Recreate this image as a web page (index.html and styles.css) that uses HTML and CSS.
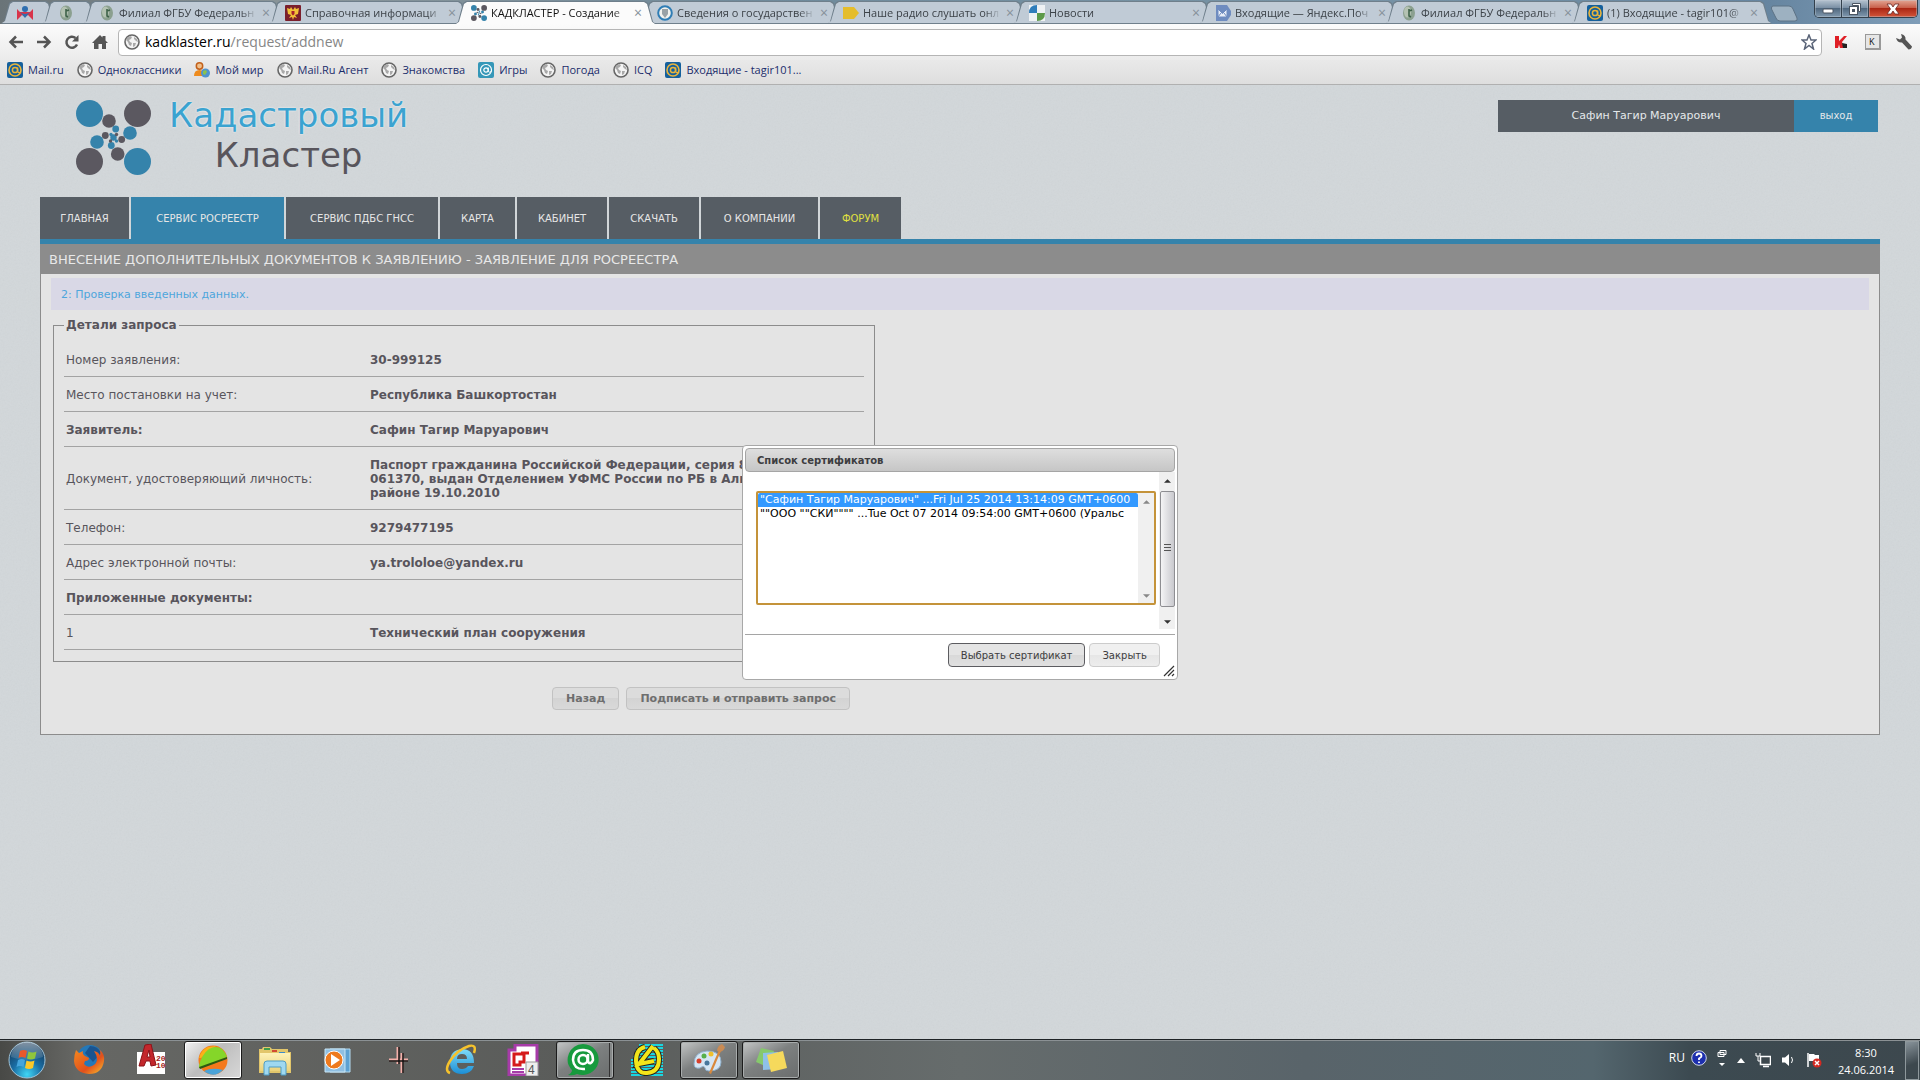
FILE: index.html
```html
<!DOCTYPE html>
<html lang="ru">
<head>
<meta charset="utf-8">
<title>КАДКЛАСТЕР - Создание запроса</title>
<link rel="stylesheet" href="styles.css">
</head>
<body>
<svg class="sprite" width="0" height="0" aria-hidden="true">
  <defs>
    <radialGradient id="orb" cx=".5" cy=".9" r=".9"><stop offset="0" stop-color="#3fd6f5"/><stop offset=".45" stop-color="#1a6ea5"/><stop offset="1" stop-color="#12304e"/></radialGradient>
    <linearGradient id="shine" x2="0" y2="1"><stop offset="0" stop-color="#fff" stop-opacity=".8"/><stop offset="1" stop-color="#fff" stop-opacity=".15"/></linearGradient>
    <linearGradient id="fox" x2="1" y2="1"><stop offset="0" stop-color="#f58a1f"/><stop offset=".6" stop-color="#e2501c"/><stop offset="1" stop-color="#f9c22e"/></linearGradient>
    <linearGradient id="folder" x2="0" y2="1"><stop offset="0" stop-color="#fdf2b8"/><stop offset="1" stop-color="#ecd27a"/></linearGradient>
    <linearGradient id="ie" x2="0" y2="1"><stop offset="0" stop-color="#7fdcf8"/><stop offset="1" stop-color="#1c8fd6"/></linearGradient>
  </defs>
  <symbol id="globe" viewBox="0 0 16 16"><circle cx="8" cy="8" r="7" fill="#f4f4f4" stroke="#666" stroke-width="1.6"/><path d="M3 4l3-2 2 1-1 2-2 1 1 2 2 1-1 3-2-1-1-3-2-2zM10 3l3 2 1 3-2-1-2-2zM9 9l3 0-1 3-2 1z" fill="#a9a9a9"/></symbol>
  <symbol id="mail" viewBox="0 0 16 16"><rect width="16" height="16" rx="2" fill="#15609c"/><circle cx="8" cy="8" r="6" fill="none" stroke="#e9b43c" stroke-width="1.6"/><circle cx="8" cy="8" r="2.6" fill="none" stroke="#e9b43c" stroke-width="1.5"/><path d="M10.6 5.5v4q1 2 3 .5" fill="none" stroke="#e9b43c" stroke-width="1.4"/></symbol>
  <symbol id="leaf" viewBox="0 0 16 16"><ellipse cx="8" cy="8" rx="6" ry="7.5" fill="#8ba08f"/><ellipse cx="6.5" cy="7" rx="3.5" ry="5.5" fill="#b4c2b2"/><path d="M8 4v7l2 1M8 6l3-1" stroke="#3e6249" stroke-width="1.6" fill="none"/></symbol>
  <symbol id="cluster" viewBox="0 0 75 75">
    <g fill="#3583ab"><circle cx="13.5" cy="13.5" r="13.5"/><circle cx="61.500" cy="61.500" r="13.5"/><circle cx="54" cy="33" r="6.800"/><circle cx="21" cy="42" r="6.800"/><circle cx="39.700" cy="29" r="3.400"/><circle cx="35.300" cy="45.500" r="3.400"/><circle cx="37.500" cy="37.500" r="3.200"/><circle cx="35" cy="34.500" r="1.700"/><circle cx="40.500" cy="41" r="1.700"/></g>
    <g fill="#5b5860"><circle cx="61.500" cy="13.500" r="13.5"/><circle cx="13.500" cy="61.500" r="13.5"/><circle cx="33" cy="21" r="6.800"/><circle cx="41.700" cy="54" r="6.800"/><circle cx="29.300" cy="35.500" r="3.400"/><circle cx="45.700" cy="39.500" r="3.400"/><circle cx="40.500" cy="34.500" r="1.700"/><circle cx="34.500" cy="41" r="1.700"/></g>
  </symbol>
  <symbol id="up" viewBox="0 0 8 4"><path d="M4 0l4 4H0z"/></symbol>
  <symbol id="down" viewBox="0 0 8 4"><path d="M4 4l4-4H0z"/></symbol>
</svg>

<header class="browser">
  <div class="tabstrip">
    <nav class="tabs" aria-label="Вкладки">
      <div class="tab pinned"><svg class="fav" viewBox="0 0 16 16"><path d="M0 4l3 3h10l3-3v11l-5-5-3 2-3-2-5 5z" fill="#d8344a"/><circle cx="8" cy="4" r="3" fill="#2f6fb0"/><path d="M3 7q5 4 10 0l-5 6z" fill="#2f6fb0"/></svg></div>
      <div class="tab pinned"><svg class="fav"><use href="#leaf"/></svg></div>
      <div class="tab"><svg class="fav"><use href="#leaf"/></svg><a href="#">Филиал ФГБУ Федеральн</a><button aria-label="Закрыть вкладку">×</button></div>
      <div class="tab"><svg class="fav" viewBox="0 0 16 16"><rect width="16" height="16" rx="1" fill="#7b1f2c"/><path d="M8 5l2-3 1 2 3-1-1 6-3 1 2 3-3-1-1 3-1-3-3 1 2-3-3-1-1-6 3 1 1-2z" fill="#f2c238"/><path d="M6.500 6h3v3L8 10.500 6.500 9z" fill="#a8202c"/></svg><a href="#">Справочная информаци</a><button aria-label="Закрыть вкладку">×</button></div>
      <div class="tab active"><svg class="fav"><use href="#cluster"/></svg><a href="#">КАДКЛАСТЕР - Создание</a><button aria-label="Закрыть вкладку">×</button></div>
      <div class="tab"><svg class="fav" viewBox="0 0 16 16"><circle cx="8" cy="8" r="6.800" fill="#f2f2ee" stroke="#2f7db5" stroke-width="2"/><path d="M5 4h6v5l-3 4-3-4z" fill="#9aa2a6"/></svg><a href="#">Сведения о государствен</a><button aria-label="Закрыть вкладку">×</button></div>
      <div class="tab"><svg class="fav" viewBox="0 0 16 16"><path d="M0 2h11l5 6-5 6H0z" fill="#e5bd2c"/></svg><a href="#">Наше радио слушать онл</a><button aria-label="Закрыть вкладку">×</button></div>
      <div class="tab"><svg class="fav" viewBox="0 0 16 16"><rect width="16" height="16" fill="#eef1f4"/><path d="M8 0v8H0q0-8 8-8z" fill="#2f7dbb"/><path d="M8 16V8h8q0 8-8 8z" fill="#5d9a4a"/></svg><a href="#">Новости</a><button aria-label="Закрыть вкладку">×</button></div>
      <div class="tab"><svg class="fav" viewBox="0 0 16 16"><path d="M1 0h11l4 6v4l-4 6H1z" fill="#6f8cc0"/><path d="M3 4h9v8H3zM3 4l4.500 4.500L12 4M3 12l3-4M12 12L9 8" fill="#e9eef8" stroke="#6f8cc0"/></svg><a href="#">Входящие — Яндекс.Поч</a><button aria-label="Закрыть вкладку">×</button></div>
      <div class="tab"><svg class="fav"><use href="#leaf"/></svg><a href="#">Филиал ФГБУ Федеральн</a><button aria-label="Закрыть вкладку">×</button></div>
      <div class="tab"><svg class="fav"><use href="#mail"/></svg><a href="#">(1) Входящие - tagir101@</a><button aria-label="Закрыть вкладку">×</button></div>
    </nav>
    <button class="newtab" aria-label="Новая вкладка"><svg width="28" height="17" viewBox="0 0 28 17"><path d="M3 1h16q3 0 4 3l4 9q1 3-2 3H10q-3 0-4-3L1.500 4Q1 1 3 1z" fill="#9db1c1" stroke="#5d7285"/></svg></button>
    <div class="wincontrols">
      <button aria-label="Свернуть"><svg width="12" height="12"><rect x="1" y="6" width="10" height="4" rx="1" fill="#fff" stroke="#4a5562"/></svg></button>
      <button aria-label="Свернуть в окно"><svg width="14" height="14"><path d="M4.500 1.500h8v8h-2v-6h-6z" fill="#fff" stroke="#4a5562"/><rect x="1.500" y="4.500" width="8" height="8" fill="#fff" stroke="#4a5562"/><rect x="4" y="7" width="3" height="3" fill="#4a5562"/></svg></button>
      <button class="close" aria-label="Закрыть"><svg width="14" height="12" viewBox="0 0 14 12"><path d="M1 1h4l2 3 2-3h4L9.500 6l3.500 5H9L7 8l-2 3H1l3.500-5z" fill="#fff" stroke="#6a2a26" stroke-width=".8"/></svg></button>
    </div>
  </div>

  <div class="toolbar">
    <button aria-label="Назад"><svg viewBox="0 0 16 16"><path d="M15 8H3M8 2.500L2.500 8 8 13.500" class="stroke"/></svg></button>
    <button aria-label="Вперёд"><svg viewBox="0 0 16 16"><path d="M1 8h12M8 2.500L13.500 8 8 13.500" class="stroke"/></svg></button>
    <button aria-label="Обновить"><svg viewBox="0 0 16 16"><path d="M13 10.500A5.500 5.500 0 1 1 11.500 4" class="stroke"/><path d="M14.500 1v6.500H8z" fill="#555"/></svg></button>
    <button aria-label="Домой"><svg viewBox="0 0 16 16"><path d="M8 1l2.500 2.500V2h3v4.500L16 9h-2v6h-4v-5H6.500v5H2V9H0z" fill="#555"/></svg></button>
    <div class="omnibox">
      <svg width="16" height="16"><use href="#globe"/></svg>
      <a class="url" href="#"><b>kadklaster.ru</b>/request/addnew</a>
      <button class="star" aria-label="Добавить в закладки"><svg width="16" height="16" viewBox="0 0 16 16"><path d="M8 1l2 5h5l-4 3.500L12.500 15 8 11.500 3.500 15 5 9.500 1 6h5z" fill="#fff" stroke="#5a6478" stroke-width="1.500"/></svg></button>
    </div>
    <div class="extensions">
      <button aria-label="Проверка ссылок"><svg viewBox="0 0 16 16"><path d="M1 2h4v5l5-5h3L8 8l2 6H6L5 10.500 4 14H1z" fill="#df1f26"/><path d="M8 9l5 1v4H9z" fill="#222"/></svg></button>
      <button class="key" aria-label="Виртуальная клавиатура">K</button>
      <button aria-label="Настройка"><svg viewBox="0 0 16 16"><path d="M5 0q5 1 4.500 5.500l6.500 7q-.5 3-3.500 3L6 8.500Q1.500 9 0 4l4 1.500 2-2z" fill="#555"/></svg></button>
    </div>
  </div>

  <nav class="bookmarks" aria-label="Закладки">
    <a href="#"><svg><use href="#mail"/></svg>Mail.ru</a>
    <a href="#"><svg><use href="#globe"/></svg>Одноклассники</a>
    <a href="#"><svg viewBox="0 0 16 16"><circle cx="5.500" cy="4" r="3.200" fill="#f0c08c" stroke="#c2601a" stroke-width="1.500"/><path d="M0 14q0-6 5.500-6T11 14z" fill="#ee8b1e"/><circle cx="11.500" cy="11" r="4.500" fill="#4f94cf"/><path d="M9 9l3-1 1 2-2 3-2-1z" fill="#8bc34e"/></svg>Мой мир</a>
    <a href="#"><svg><use href="#globe"/></svg>Mail.Ru Агент</a>
    <a href="#"><svg><use href="#globe"/></svg>Знакомства</a>
    <a href="#"><svg viewBox="0 0 16 16"><rect width="16" height="16" rx="2" fill="#3597b8"/><circle cx="8" cy="8" r="5.500" fill="none" stroke="#fff" stroke-width="1.200"/><circle cx="8" cy="8" r="2.200" fill="none" stroke="#fff" stroke-width="1.200"/><path d="M10.300 5.500v4q1 1.500 3 0" fill="none" stroke="#fff"/></svg>Игры</a>
    <a href="#"><svg><use href="#globe"/></svg>Погода</a>
    <a href="#"><svg><use href="#globe"/></svg>ICQ</a>
    <a href="#"><svg><use href="#mail"/></svg>Входящие - tagir101...</a>
  </nav>
</header>

<main class="page">
  <div class="masthead">
    <a class="logo" href="#">
      <svg width="75" height="75"><use href="#cluster"/></svg>
      <span class="wordmark"><span class="top">Кадастровый</span><span>Кластер</span></span>
    </a>
    <div class="account"><span class="who">Сафин Тагир Маруарович</span><a href="#">выход</a></div>
  </div>

  <nav class="menu" aria-label="Меню">
    <a href="#">ГЛАВНАЯ</a>
    <a href="#" class="current">СЕРВИС РОСРЕЕСТР</a>
    <a href="#">СЕРВИС ПДБС ГНСС</a>
    <a href="#">КАРТА</a>
    <a href="#">КАБИНЕТ</a>
    <a href="#">СКАЧАТЬ</a>
    <a href="#">О КОМПАНИИ</a>
    <a href="#" class="forum">ФОРУМ</a>
  </nav>

  <section class="panel">
    <h1>ВНЕСЕНИЕ ДОПОЛНИТЕЛЬНЫХ ДОКУМЕНТОВ К ЗАЯВЛЕНИЮ - ЗАЯВЛЕНИЕ ДЛЯ РОСРЕЕСТРА</h1>
    <p class="step">2: Проверка введенных данных.</p>
    <form class="request">
      <fieldset>
        <legend>Детали запроса</legend>
        <table>
          <tr><td>Номер заявления:</td><td>30-999125</td></tr>
          <tr><td>Место постановки на учет:</td><td>Республика Башкортостан</td></tr>
          <tr><th scope="row">Заявитель:</th><td>Сафин Тагир Маруарович</td></tr>
          <tr><td>Документ, удостоверяющий личность:</td><td>Паспорт гражданина Российской Федерации, серия 8<br>061370, выдан Отделением УФМС России по РБ в Аль<br>районе 19.10.2010</td></tr>
          <tr><td>Телефон:</td><td>9279477195</td></tr>
          <tr><td>Адрес электронной почты:</td><td>ya.trololoe@yandex.ru</td></tr>
          <tr><th scope="row">Приложенные документы:</th><td></td></tr>
          <tr><td>1</td><td>Технический план сооружения</td></tr>
        </table>
      </fieldset>
      <div class="actions">
        <button type="button" class="ui">Назад</button>
        <button type="button" class="ui">Подписать и отправить запрос</button>
      </div>
    </form>
  </section>

  <div class="dialog" role="dialog" aria-labelledby="dlg-title">
    <h2 id="dlg-title">Список сертификатов</h2>
    <div class="dlg-body">
      <div class="listbox">
        <select size="8" aria-labelledby="dlg-title">
          <option class="picked">"Сафин Тагир Маруарович" ...Fri Jul 25 2014 13:14:09 GMT+0600</option>
          <option>""ООО ""СКИ"""" ...Tue Oct 07 2014 09:54:00 GMT+0600 (Уральс</option>
        </select>
        <div class="scroll idle"><svg><use href="#up"/></svg><svg><use href="#down"/></svg></div>
      </div>
      <div class="scroll"><svg><use href="#up"/></svg><i class="thumb"></i><svg><use href="#down"/></svg></div>
    </div>
    <div class="dlg-buttons">
      <button type="button" class="primary">Выбрать сертификат</button>
      <button type="button">Закрыть</button>
    </div>
    <svg class="grip" width="12" height="12"><path d="M1 11L11 1M5 11l6-6M9 11l2-2" stroke="#333" stroke-width="1.200"/></svg>
  </div>
</main>

<footer class="taskbar">
  <button class="start" aria-label="Пуск"><svg width="38" height="38" viewBox="0 0 38 38"><circle cx="19" cy="19" r="18" fill="url(#orb)" stroke="#9fc3d8"/><path d="M3 16a16 15 0 0 1 32 0q-16 6-32 0z" fill="url(#shine)" opacity=".6"/><path d="M12 10q4-2 7 0l-1.500 7q-4-2-7 0z" fill="#e8582c"/><path d="M20.500 10.500q4 2 8 0L27 17.500q-4 2-8 0z" fill="#8fc63c"/><path d="M10 19q4-2 7 0l-1.500 7q-4-2-7 0z" fill="#45a5dc"/><path d="M18.500 19.500q4 2 8 0L25 27q-4 2-8 0z" fill="#fcc829"/></svg></button>
  <div class="tasks">
    <button aria-label="Firefox"><svg viewBox="0 0 32 32"><circle cx="17" cy="14" r="13" fill="#2478b8"/><path d="M17 2q8 0 11 7l-8 9-8-9z" fill="#1a5490"/><path d="M3 6l3 3 4-2q-1 3 2 5l4 2q0 3-4 3l-1 3q3 4 8 2 5-2 5-7 0-4-3-8 5 1 6 5 1-5-1-7 6 5 5 12-2 13-15 13Q2 29 1 17 1 11 3 6z" fill="url(#fox)"/></svg></button>
    <button aria-label="AutoCAD 2010"><svg viewBox="0 0 32 32"><rect x="2" y="8" width="28" height="22" fill="#fff"/><path d="M4 22L10 1l6-1 5 21-5 1-1-5h-4l-2 5zM12 13h3l-1-7z" fill="#c3272c" stroke="#8c1219"/><text x="21" y="17" class="year">20</text><text x="21" y="24" class="year">10</text></svg></button>
    <button class="lit" aria-label="Браузер"><svg viewBox="0 0 32 32"><circle cx="16" cy="16" r="14.500" fill="#f4791c"/><path d="M2 14Q4 6 11 3l8-1L4 14z" fill="#fbb117"/><path d="M2 22Q4 11 12 5q7-4 13 0 4 4 5 8L2 24z" fill="#85d629"/><path d="M2 23l28-10v2L3 25z" fill="#2c5a12"/><path d="M7 27q8-4 19-1-9 9-19 1z" fill="#4aa3d8"/></svg></button>
    <button aria-label="Проводник"><svg viewBox="0 0 32 32"><path d="M0 5h3l1-2h7l2 2h16v3h3v21H0z" fill="#e2c66b"/><path d="M5 4h6v2H5z" fill="#3f9c4a"/><path d="M13 6h5v2h-5z" fill="#d24b32"/><path d="M20 8h6v2h-6z" fill="#3c8cc8"/><path d="M1 9h30v18H1z" fill="url(#folder)"/><path d="M5 20q0-3 3-3h16q3 0 3 3v11h-5v-8H10v8H5z" fill="#9fd8f0" stroke="#4f9cc4"/></svg></button>
    <button aria-label="Проигрыватель"><svg viewBox="0 0 32 32"><path d="M9 5h20v23H9z" fill="#5da1d2" stroke="#b5dcf2"/><path d="M4 5h20v23H4z" fill="#8fbfe2" stroke="#c8e6f6"/><circle cx="13" cy="16" r="9" fill="#ee7a1e" stroke="#fff"/><path d="M10 10l9 6-9 6z" fill="#fff"/></svg></button>
    <button aria-label="Компас"><svg viewBox="0 0 32 32"><path d="M15 3v17M6 16h19M19 9v20" stroke="#f4b0aa" stroke-width="3"/><path d="M16 3v17M6 17h19M20 9v20" stroke="#111" stroke-width="1.500"/></svg></button>
    <button aria-label="Internet Explorer"><svg viewBox="0 0 32 32"><path d="M29 19H12q0 6 5 6 4 0 6-3h6q-3 8-12 8Q5 30 5 18T17 5q12 0 12 14zM12 15h10q0-5-5-5t-5 5z" fill="url(#ie)"/><path d="M5 29Q-1 27 5 17 12 6 24 2q8-2 5 7" fill="none" stroke="#f6c22c" stroke-width="2.500"/></svg></button>
    <button aria-label="Документы"><svg viewBox="0 0 32 32"><path d="M8 1h22v22h-6v8H2V6h6z" fill="#fff" stroke="#a63ba8" stroke-width="3"/><path d="M7 10h10v8h-4v3H7zM14 9h8" stroke="#d51b1b" stroke-width="3" fill="none"/><path d="M5 25h12M5 28h12" stroke="#a63ba8" stroke-width="2"/><path d="M19 18h12v14H19z" fill="#eee" stroke="#999"/><text x="21" y="30" class="four">4</text></svg></button>
    <button class="open stack" aria-label="Mail.Ru Агент"><svg viewBox="0 0 32 32"><path d="M16 0a16 15.500 0 1 1-6 30q-4 2-9 1 4-2 4-5A16 15.500 0 0 1 16 0z" fill="#179a3d"/><circle cx="16" cy="15.500" r="4.500" fill="none" stroke="#fff" stroke-width="2.500"/><path d="M21 10v8q3 3 5-2 0-10-10-10T6 16q1 10 12 9" fill="none" stroke="#fff" stroke-width="2.500"/></svg></button>
    <button aria-label="Credo"><svg viewBox="0 0 32 32"><path d="M8 1h24M6 4h26M4 7h28M4 10h28M2 13h30M0 16h32M0 19h32M0 22h32M0 25h32M0 28h32M0 31h32" stroke="#19d5e0" stroke-width="2"/><path d="M14 3Q5 5 5 17q1 13 11 12 12-1 12-14 0-7-5-11M22 2L8 20l15-3" fill="none" stroke="#222" stroke-width="6"/><path d="M14 3Q5 5 5 17q1 13 11 12 12-1 12-14 0-7-5-11M22 2L8 20l15-3" fill="none" stroke="#f2e51a" stroke-width="4"/></svg></button>
    <button class="open" aria-label="Paint"><svg viewBox="0 0 32 32"><path d="M1 20Q1 8 14 7q14 0 14 11 0 9-12 9-4 0-4-3-1-3-5 0-6 1-6-4z" fill="#d5e6f4" stroke="#8fb0cc"/><circle cx="6" cy="17" r="2.500" fill="#d8402c"/><circle cx="11" cy="12" r="2.500" fill="#57b04a"/><circle cx="18" cy="10" r="2.500" fill="#f0c02c"/><circle cx="14" cy="19" r="2.500" fill="#47779c"/><path d="M26 6l2 1-10 23-2-1z" fill="#d9893c"/><path d="M24 7q0-5 5-7l3 3q-1 4-5 5z" fill="#c98b54"/></svg></button>
    <button class="open" aria-label="Записки"><svg viewBox="0 0 32 32"><path d="M6 4l13 3-4 17-14-6z" fill="#86c96c"/><path d="M8 9l15-1v17l-15 1z" fill="#8fc1e8"/><path d="M12 11l16-4 4 17-16 4z" fill="#f6d95c"/></svg></button>
  </div>
  <div class="tray">
    <span class="lang">RU</span>
    <svg class="help" width="16" height="16" viewBox="0 0 16 16"><circle cx="8" cy="8" r="7.300" fill="#1d2fae" stroke="#cfd6e6"/><path d="M5.500 6q0-2.500 2.500-2.500T10.500 6Q10.500 7.300 8 8.500V10M8 11.500v1.500" stroke="#fff" stroke-width="1.800" fill="none"/></svg>
    <svg class="langbar" width="10" height="18" viewBox="0 0 10 18"><path d="M3 1.500h6v4H3zM1 3.500h6v4H1z" fill="#46535a" stroke="#fff"/><path d="M2 14h6l-3 3z" fill="#fff"/></svg>
    <svg class="more" width="8" height="5" viewBox="0 0 8 5"><path d="M4 0l4 5H0z" fill="#fff"/></svg>
    <svg width="16" height="16" viewBox="0 0 16 16"><path d="M5.500 4.500h10v8h-10zM8 14.500h6" fill="#3c474d" stroke="#fff" stroke-width="1.500"/><path d="M1 1v3h4V1M3 4v5h3" stroke="#fff" fill="none"/></svg>
    <svg width="14" height="16" viewBox="0 0 14 16"><path d="M1 5.500h3L8 2v12l-4-3.500H1z" fill="#fff"/><path d="M10.500 5q2 3 0 6" stroke="#fff" fill="none"/></svg>
    <svg width="18" height="16" viewBox="0 0 18 16"><path d="M3 1v14" stroke="#fff" stroke-width="1.500"/><path d="M4 2h5l1 1h4v6H4z" fill="#fff"/><circle cx="12" cy="11" r="4.500" fill="#d42a22"/><path d="M10 9l4 4M14 9l-4 4" stroke="#fff" stroke-width="1.500"/></svg>
    <div class="clock"><span>8:30</span><span>24.06.2014</span></div>
    <button class="desktop" aria-label="Показать рабочий стол"></button>
  </div>
</footer>
</body>
</html>
```
FILE: styles.css
```css
* { box-sizing: border-box; }
body {
  margin: 0;
  min-height: 100vh;
  display: flex;
  flex-direction: column;
  font-family: "DejaVu Sans", sans-serif;
  font-size: 12px;
  line-height: 14px;
  color: #58555c;
}
button { font: inherit; color: inherit; padding: 0; border: 0; background: none; }
a { color: inherit; text-decoration: none; }
.sprite { position: absolute; }
svg { flex: none; display: block; }

/* Browser window */
.browser { font-family: "Open Sans", "Noto Sans", sans-serif; font-size: 11px; line-height: 16px; }
.tabstrip {
  display: flex;
  height: 24px;
  padding-left: 1px;
  background: linear-gradient(90deg, #6a7478 0, #8a9599 15%, #6f8a9b 40%, #7894a6 70%, #6685a0 92%, #7f9db8);
}
.tabs { display: flex; flex: 0 1 1756px; min-width: 0; }
.tab {
  position: relative;
  z-index: 1;
  flex: 0 1 201px;
  min-width: 0;
  display: flex;
  align-items: center;
  gap: 4px;
  height: 24px;
  margin-right: -15px;
  padding: 1px 13px 0 16px;
  color: #3c4248;
}
.tab::before, .tab::after {
  content: "";
  position: absolute;
  z-index: -1;
  inset: 1px 0 0;
  background: #6f7f8b;
  clip-path: polygon(0 100%, 3px 90%, 8px 2px, 11px 0, calc(100% - 11px) 0, calc(100% - 8px) 2px, calc(100% - 3px) 90%, 100% 100%);
}
.tab::after { inset: 2px 1px 1px; background: #c0cbd6; }
.tab.active { z-index: 3; color: #111; }
.tab.active::after { background: #fbfbfb; inset: 2px 1px 0; }
.tab.pinned { flex: 0 0 56px; }
.fav { width: 16px; height: 16px; }
.tab a {
  flex: 1;
  min-width: 0;
  overflow: hidden;
  white-space: nowrap;
  mask-image: linear-gradient(90deg, #000 calc(100% - 16px), transparent);
}
.tab button { width: 10px; font-size: 14px; color: #86909a; }
.newtab { margin: 5px 0 0 13px; align-self: flex-start; }
.wincontrols {
  display: flex;
  margin-left: auto;
  margin-right: 2px;
  height: 18px;
  border: 1px solid #33404c;
  border-top: 0;
  border-radius: 0 0 5px 5px;
  overflow: hidden;
}
.wincontrols button {
  width: 27px;
  display: grid;
  place-items: center;
  background: linear-gradient(#b5c3d0, #7b90a5 45%, #50687f 50%, #8199ae);
  box-shadow: inset 0 0 0 1px #c3ced866;
  border-right: 1px solid #33404c;
}
.wincontrols .close { width: 48px; border: 0; background: linear-gradient(#e3a795, #c9604b 45%, #ab2714 50%, #d2553a); }

.toolbar {
  display: flex;
  align-items: center;
  gap: 12px;
  height: 36px;
  padding: 0 8px;
  background: linear-gradient(#fbfbfb, #ebebeb);
}
.toolbar > button, .extensions button { width: 16px; height: 16px; }
.stroke { fill: none; stroke: #555; stroke-width: 2.5; }
.omnibox {
  flex: 1;
  display: flex;
  align-items: center;
  gap: 5px;
  height: 27px;
  margin-left: -2px;
  padding: 0 4px 0 5px;
  background: #fff;
  border: 1px solid #b5b5b5;
  border-radius: 4px;
}
.url { flex: 1; font-size: 14px; color: #868686; }
.url b { font-weight: 400; color: #000; }
.extensions { display: flex; gap: 15px; }
.extensions .key { border: 1px solid #999; border-width: 1px 2px 2px 1px; background: #e6e6e6; font-size: 9px; line-height: 12px; color: #111; text-align: left; padding-left: 3px; }

.bookmarks {
  display: flex;
  align-items: center;
  gap: 13px;
  height: 25px;
  padding: 0 7px 4px;
  background: linear-gradient(#e9e9e9, #dedede);
  border-bottom: 1px solid #b0b0b0;
  color: #1b2d6b;
}
.bookmarks a { display: flex; align-items: center; gap: 5px; }
.bookmarks svg { width: 16px; height: 16px; }

/* Site */
.page {
  position: relative;
  flex: 1;
  padding: 15px 40px 40px;
  background: #d2d7da url("data:image/svg+xml,%3Csvg xmlns='http://www.w3.org/2000/svg' width='240' height='240'%3E%3Cfilter id='n'%3E%3CfeTurbulence type='fractalNoise' baseFrequency='.6' numOctaves='3' stitchTiles='stitch'/%3E%3CfeColorMatrix type='saturate' values='0'/%3E%3C/filter%3E%3Crect width='240' height='240' filter='url(%23n)' opacity='.07'/%3E%3C/svg%3E");
}
.masthead { display: flex; justify-content: space-between; align-items: flex-start; height: 97px; padding: 0 2px 0 36px; }
.logo { display: flex; gap: 18px; color: #58555c; }
.wordmark { display: flex; flex-direction: column; align-items: center; font-size: 34px; line-height: 40px; margin-top: -5px; }
.wordmark .top { color: #3ba3d0; text-shadow: 0 0 2px #fff; }
.account { display: flex; font-size: 10px; line-height: 32px; text-align: center; color: #e4e8ea; }
.account .who { width: 296px; background: #565d64; font-size: 11px; }
.account a { width: 84px; background: #3583ab; }

.menu {
  display: grid;
  grid-template-columns: 89px 153px 152px 75px 90px 90px 117px 81px;
  gap: 2px;
  border-bottom: 5px solid #3583ab;
  font-size: 10px;
  line-height: 40px;
  text-align: center;
  color: #e6e6e6;
}
.menu a { padding-top: 2px; background: #565d64; }
.menu .current { background: #3583ab; }
.menu .forum { color: #e0e040; }

.panel { background: #e4e4e4; border: 1px solid #8c8c8c; border-top: 0; padding-bottom: 24px; }
.panel h1 { margin: 0; padding: 2px 8px 0; background: #8c8c8c; color: #e8e8e8; font-size: 13px; font-weight: 400; line-height: 28px; }
.step { margin: 4px 10px 8px; padding: 2px 10px 0; background: #d9d8e6; color: #4ea6dc; font-size: 11px; line-height: 30px; }
.request { width: 822px; margin-left: 12px; }
fieldset { margin: 0; padding: 10px 10px 11px; border: 1px solid #8c8c8c; min-width: 0; }
legend { padding: 0 2px; font-weight: 700; }
fieldset table { width: 100%; border-collapse: collapse; table-layout: fixed; }
fieldset td, fieldset th { padding: 11px 2px 9px; border-bottom: 1px solid #a3a3a3; text-align: left; white-space: nowrap; overflow: hidden; }
fieldset td:first-child, fieldset th { width: 304px; }
fieldset td:last-child { font-weight: 700; }
.actions { display: flex; justify-content: flex-end; gap: 7px; margin-top: 25px; padding-right: 25px; }
.ui {
  height: 23px;
  padding: 0 13px;
  border: 1px solid #c2c2c2;
  border-radius: 4px;
  background: linear-gradient(#dcdcdc 50%, #d3d3d3 50%, #d9d9d9);
  color: #6e6e6e;
  font-size: 11px;
  font-weight: 700;
}

/* Certificate picker, floating over the request */
.dialog {
  position: absolute;
  left: 742px;
  top: 360px;
  width: 436px;
  padding: 2px;
  background: #fff;
  border: 1px solid #a8a8a8;
  border-radius: 4px;
  color: #3d3d40;
}
.dialog h2 {
  margin: 0;
  padding: 2px 11px 0;
  border: 1px solid #a5a5a5;
  border-radius: 4px;
  background: linear-gradient(#dedede, #c6c6c6);
  font-size: 10px;
  line-height: 20px;
}
.dlg-body { display: flex; height: 157px; }
.listbox { flex: 1; display: flex; height: 114px; margin: 19px 3px 0 11px; border: 2px solid #c4933a; border-radius: 2px; min-width: 0; }
.listbox select {
  flex: 1;
  min-width: 0;
  height: 110px;
  margin: 0;
  padding: 0;
  border: 0;
  outline: 0;
  overflow: hidden;
  background: #fff;
  color: #000;
  font: 11px/14px "DejaVu Sans", sans-serif;
}
.listbox option { height: 14px; min-height: 14px; padding: 0 2px; line-height: 14px; }
.listbox .picked { background: #3399ff; color: #fff; }
.scroll { width: 16px; display: flex; flex-direction: column; align-items: center; justify-content: space-between; padding: 7px 0 5px; background: #f0f0f0; }
.scroll svg { width: 7px; height: 4px; fill: #333; }
.scroll.idle svg { fill: #888; }
.thumb {
  width: 15px;
  height: 116px;
  display: block;
  margin-bottom: 6px;
  border: 1px solid #8e8e92;
  border-radius: 2px;
  background:
    repeating-linear-gradient(#555 0 1px, transparent 1px 3px) center / 7px 9px no-repeat,
    linear-gradient(90deg, #f4f4f5, #c9c9ce);
}
.dlg-buttons { display: flex; justify-content: flex-end; gap: 4px; margin-top: 5px; padding: 8px 15px 10px; border-top: 1px solid #a5a5a5; }
.dlg-buttons button { height: 24px; padding: 1px 12px 0; border: 1px solid #ccc; border-radius: 4px; font-size: 10px; background: linear-gradient(#f0f0f0 50%, #e6e6e6 50%, #ededed); }
.dlg-buttons .primary { border-color: #5c5c60; background: linear-gradient(#e4e4e4 50%, #d9d9d9 50%, #e0e0e0); }
.grip { position: absolute; right: 2px; bottom: 2px; }

/* Taskbar */
.taskbar {
  display: flex;
  height: 41px;
  border-top: 1px solid #1e2326;
  box-shadow: inset 0 1px #8b9194;
  background: linear-gradient(90deg, #484946 0, #666764 4%, #5a5c5a 30%, #666c6c 50%, #59646a 68%, #54666e 83%, #3c4a51 88%, #3d484e);
  font-family: "Open Sans", "Noto Sans", sans-serif;
  color: #fff;
}
.start { width: 52px; margin-right: 8px; display: grid; place-items: center end; padding-right: 6px; }
.tasks { display: flex; gap: 4px; padding: 1px 0; }
.tasks button { width: 58px; display: grid; place-items: center; border-radius: 3px; }
.tasks svg { width: 32px; height: 32px; }
.tasks .open { border: 1px solid #1c1c1c; box-shadow: inset 0 0 0 1px #a8acac; background: linear-gradient(150deg, #c4c6c6, #7d8080 45%, #6a6d6d); }
.tasks .stack { padding-right: 5px; background: linear-gradient(90deg, transparent 52px, #333 52px 53px, #858888 53px), linear-gradient(150deg, #c4c6c6, #7d8080 45%, #6a6d6d); }
.tasks .lit { border: 1px solid #1c1c1c; box-shadow: inset 0 0 0 1px #fff; background: linear-gradient(135deg, #f2f2f2, #bdbdbd 45%, #d8d8d8); }
.year { font: 700 8px "Liberation Mono", monospace; fill: #a31d20; }
.four { font: 12px "Liberation Sans", sans-serif; fill: #555; }
.tray { display: flex; align-items: center; margin-left: auto; gap: 10px; }
.lang { font-size: 12px; margin-right: -4px; }
.lang, .help, .langbar { margin-bottom: 4px; }
.clock { display: flex; flex-direction: column; align-items: center; width: 66px; padding-top: 2px; font-size: 11px; line-height: 17px; white-space: nowrap; }
.desktop { width: 14px; height: 39px; margin: 0 1px 0 -4px; border: 1px solid #8e989c; background: linear-gradient(160deg, #88939a, #3d484e 60%); }
```
